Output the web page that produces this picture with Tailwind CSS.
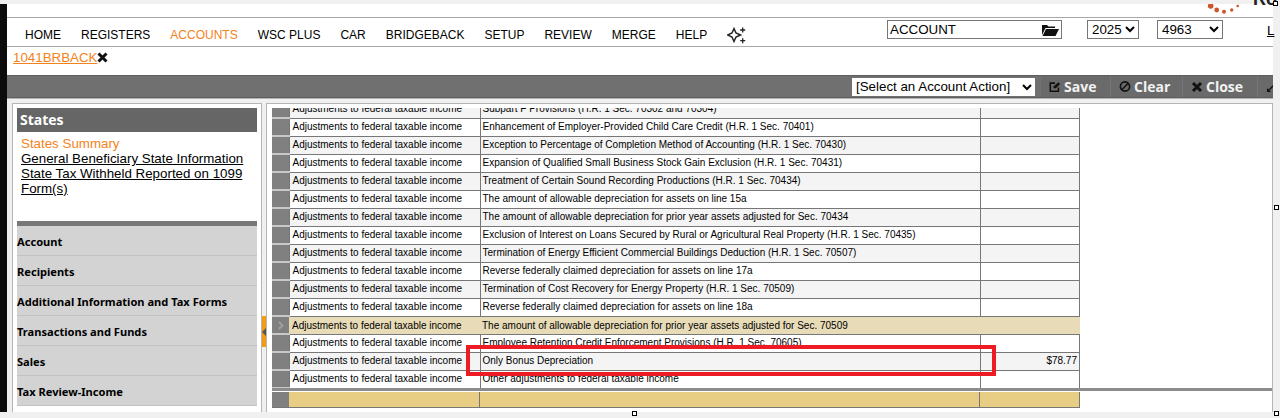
<!DOCTYPE html>
<html lang="en">
<head>
  <meta charset="UTF-8">
  <title>Accounts - States</title>
  <script src="https://cdn.jsdelivr.net/npm/@tailwindcss/browser@4"></script>
</head>
<body class="bg-[#f0f0f0] font-['Liberation_Sans',Arial,sans-serif] text-black overflow-hidden">
<div class="relative w-[1280px] h-[418px] overflow-hidden pt-[4px]">
  <!-- page frame: black strip on the left, light strip on the right and bottom -->
  <div class="flex h-[408px]">
    <div class="w-[7px] shrink-0 bg-[#0c0c0c]"></div>
    <div class="w-[1266px] bg-white flex flex-col">

      <!-- logo strip -->
      <div class="relative h-[13px] shrink-0">
        <svg class="absolute left-[1198px] top-0" width="40" height="10" viewBox="0 0 40 10" fill="#d0562a">
          <circle cx="5.700" cy="2" r="2.800"/><circle cx="11.700" cy="6" r="2.400"/><circle cx="19" cy="7.700" r="2"/><circle cx="26.700" cy="6" r="1.700"/><circle cx="32.700" cy="2" r="1.300"/>
        </svg>
        <span class="absolute left-[1246px] top-[-18px] text-[18px] font-bold text-[#222]">Ro</span>
      </div>

      <!-- main nav -->
      <div class="h-[30px] shrink-0 border-y border-[#a9a9a9] flex items-center relative">
        <nav class="flex items-center gap-[20px] pl-[18px] text-[12px] pt-[6px]">
          <a>HOME</a><a>REGISTERS</a><a class="text-[#f58220]">ACCOUNTS</a><a>WSC PLUS</a><a>CAR</a><a>BRIDGEBACK</a><a>SETUP</a><a>REVIEW</a><a>MERGE</a><a>HELP</a>
          <svg width="20" height="20" viewBox="0 0 20 20" fill="none" stroke="#222" stroke-width="1.500"><path d="M7 3.500 L9 8 L13.500 10 L9 12 L7 16.500 L5 12 L0.500 10 L5 8 Z"/><path d="M15.700 2.500v5M13.200 5h5M15.700 13.200v5M13.200 15.700h5" stroke-width="1.300"/></svg>
        </nav>
        <div class="absolute left-[880px] top-[2px] w-[175px] h-[19px] border border-[#767676] flex items-center justify-between pl-[2px] pr-[2px] text-[13.33px]">
          <span>ACCOUNT</span>
          <svg width="17" height="12" viewBox="0 0 17 12" fill="#111"><path d="M0 11V1h5l1.500 1.500H13V4H3.500L0 11Z"/><path d="M4 5h13l-3.500 7H0.500Z"/></svg>
        </div>
        <select class="absolute left-[1080px] top-[2px] w-[52px] h-[19px] border border-[#767676] text-[13.33px] bg-white"><option>2025</option></select>
        <select class="absolute left-[1150px] top-[2px] w-[66px] h-[19px] border border-[#767676] text-[13.33px] bg-white"><option>4963</option></select>
        <a class="absolute left-[1260px] top-[3px] text-[13.33px] underline text-black">L</a>
      </div>

      <!-- open account tab -->
      <div class="h-[28px] shrink-0 pl-[6px] pt-[1px] flex items-start text-[13.33px]">
        <a class="text-[#f58220] underline">1041BRBACK</a>
        <svg class="mt-[4px]" width="11" height="11" viewBox="0 0 11 11" fill="none" stroke="#111" stroke-width="3"><path d="M1.500 1.500l8 8M9.500 1.500l-8 8"/></svg>
      </div>

      <!-- action bar -->
      <div class="h-[23px] shrink-0 bg-[#707070] border-y border-[#5f5f5f] flex items-center justify-end font-['Open_Sans',sans-serif] font-bold text-[14px] text-[#f2f2f2]">
        <select class="w-[183px] h-[18px] bg-white text-black text-[13.33px] font-normal font-['Liberation_Sans',sans-serif] mr-[6px]"><option>[Select an Account Action]</option></select>
        <div class="w-[69px] h-full bg-[#6a6a6a] flex items-center gap-[3px] pl-[8px]">
          <svg width="12" height="12" viewBox="0 0 14 13" fill="none" stroke="#111" stroke-width="1.800"><path d="M7 2H1.500v9.500H11V7"/><path d="M5 8l.5-2.500L11 1l2 2-5 5z" fill="#111" stroke="none"/></svg>Save</div>
        <div class="w-[72px] h-full bg-[#6a6a6a] border-l border-[#777] flex items-center gap-[3px] pl-[8px]">
          <svg width="12" height="13" viewBox="0 0 13 13" fill="none" stroke="#111" stroke-width="1.800"><circle cx="6.500" cy="6.500" r="5"/><path d="M3 10l7-7"/></svg>Clear</div>
        <div class="w-[75px] h-full bg-[#6a6a6a] border-l border-[#777] flex items-center gap-[3px] pl-[8px]">
          <svg width="12" height="12" viewBox="0 0 12 12" fill="none" stroke="#111" stroke-width="3"><path d="M2 2l8 8M10 2l-8 8"/></svg>Close</div>
        <div class="w-[16px] h-full bg-[#6a6a6a] border-l border-[#777] pl-[8px] flex items-center overflow-hidden">
          <svg class="shrink-0" width="12" height="12" viewBox="0 0 12 12" stroke="#111" stroke-width="1.500" fill="#111"><path d="M2 10l8-8" /><path d="M1 7v4h4zM11 5V1H7z" stroke="none"/></svg>
        </div>
      </div>

      <!-- body -->
      <div class="flex-1 min-h-0 flex bg-[#f0f0f0] border-t border-[#b5b5b5] pl-[5px] pt-[4px]">
        <!-- left panel -->
        <aside class="relative w-[250px] shrink-0 bg-white border border-[#b5b5b5] border-b-0 p-[4px] overflow-hidden">
          <h2 class="h-[24px] bg-[#666] text-white font-['Open_Sans',sans-serif] font-bold text-[14px] leading-[24px] pl-[3px]">States</h2>
          <div class="h-[89px] pl-[4px] pt-[4px] text-[13.33px] leading-[15px]">
            <a class="block text-[#f58220]">States Summary</a>
            <a class="block underline">General Beneficiary State Information</a>
            <a class="block underline">State Tax Withheld Reported on 1099 Form(s)</a>
          </div>
          <div class="border-t-[5px] border-[#777] bg-[#d3d3d3] font-['Noto_Sans',sans-serif] font-bold text-[11.1px]">
            <div class="h-[30px] pt-[3px] flex items-center border-b border-[#c2c2c2]">Account</div>
            <div class="h-[30px] pt-[3px] flex items-center border-b border-[#c2c2c2]">Recipients</div>
            <div class="h-[30px] pt-[3px] flex items-center border-b border-[#c2c2c2]">Additional Information and Tax Forms</div>
            <div class="h-[30px] pt-[3px] flex items-center border-b border-[#c2c2c2]">Transactions and Funds</div>
            <div class="h-[30px] pt-[3px] flex items-center border-b border-[#c2c2c2]">Sales</div>
            <div class="h-[30px] pt-[3px] flex items-center border-b border-[#c2c2c2]">Tax Review-Income</div>
          </div>
        </aside>

        <!-- splitter -->
        <div class="w-[4px] shrink-0 pt-[213px]">
          <div class="h-[31px] bg-[#f39c12] flex items-center justify-center">
            <svg width="4" height="8" viewBox="0 0 4 8" fill="#555"><path d="M4 0v8L0 4z"/></svg>
          </div>
        </div>

        <!-- grid panel -->
        <section class="flex-1 min-w-0 bg-white border border-[#b5b5b5] border-b-0 pl-[5px] pt-[4px] overflow-hidden">
          <div class="h-[280px] overflow-hidden">
            <table id="rows" class="mt-[-9px] w-[808px] table-fixed border-collapse text-[10px]"></table>
          </div>
          <div class="h-[3px] bg-[#8c8c8c]"></div>
          <div class="flex h-[16px] mt-[1px] w-[808px] border-b border-[#777]">
            <div class="w-[17px] bg-[#808080]"></div>
            <div class="w-[191px] bg-[#e8cd85] border-r border-[#777]"></div>
            <div class="w-[500px] bg-[#e8cd85] border-r border-[#777]"></div>
            <div class="flex-1 bg-[#e8cd85] border-r border-[#777]"></div>
          </div>
        </section>
      </div>
    </div>
    <div class="flex-1 bg-[#f0f0f0]"></div>
  </div>

  <!-- annotation drawn over the screenshot -->
  <div class="absolute left-[466px] top-[345px] w-[530px] h-[31px] border-[4px] border-[#ed1c24]"></div>

  <!-- selection handles -->
  <div class="absolute left-[1273px] top-[1px] w-[5px] h-[5px] bg-white border border-black"></div>
  <div class="absolute left-[1274px] top-[205px] w-[5px] h-[5px] bg-white border border-black"></div>
  <div class="absolute left-[632px] top-[411px] w-[5px] h-[5px] bg-white border border-black"></div>
  <div class="absolute left-[1274px] top-[411px] w-[5px] h-[5px] bg-white border border-black"></div>
</div>

<script>
  const labels = [
    'Subpart F Provisions (H.R. 1 Sec. 70302 and 70304)',
    'Enhancement of Employer-Provided Child Care Credit (H.R. 1 Sec. 70401)',
    'Exception to Percentage of Completion Method of Accounting (H.R. 1 Sec. 70430)',
    'Expansion of Qualified Small Business Stock Gain Exclusion (H.R. 1 Sec. 70431)',
    'Treatment of Certain Sound Recording Productions (H.R. 1 Sec. 70434)',
    'The amount of allowable depreciation for assets on line 15a',
    'The amount of allowable depreciation for prior year assets adjusted for Sec. 70434',
    'Exclusion of Interest on Loans Secured by Rural or Agricultural Real Property (H.R. 1 Sec. 70435)',
    'Termination of Energy Efficient Commercial Buildings Deduction (H.R. 1 Sec. 70507)',
    'Reverse federally claimed depreciation for assets on line 17a',
    'Termination of Cost Recovery for Energy Property (H.R. 1 Sec. 70509)',
    'Reverse federally claimed depreciation for assets on line 18a',
    'The amount of allowable depreciation for prior year assets adjusted for Sec. 70509',
    'Employee Retention Credit Enforcement Provisions (H.R. 1 Sec. 70605)',
    'Only Bonus Depreciation',
    'Other adjustments to federal taxable income'
  ];

  const chevron = '<svg class="mx-auto" width="6" height="9" viewBox="0 0 6 9" fill="none" stroke="#a0a0a0" stroke-width="1.800"><path d="M1 1l3.500 3.500L1 8"/></svg>';

  document.getElementById('rows').innerHTML = `
    <colgroup><col class="w-[17px]"><col class="w-[191px]"><col class="w-[500px]"><col></colgroup>
    ${labels.map((label, i) => {
      const selected = i === 12;
      const bg = selected ? 'bg-[#e8dcb8]' : (i % 2 === 0 ? 'bg-[#f4f4f4]' : 'bg-white');
      const cell = selected ? 'border-y border-[#777]' : 'border border-[#777]';
      const nudge = selected ? 'pt-[2px]' : '';
      return `<tr class="h-[18px] ${bg}">
        <td class="bg-[#808080] border-y-2 border-[#c8c8c8] p-0">${selected ? chevron : ''}</td>
        <td class="${cell} ${nudge} pl-[3px] whitespace-nowrap overflow-hidden leading-[12px]">Adjustments to federal taxable income</td>
        <td class="${cell} ${nudge} pl-[2px] whitespace-nowrap overflow-hidden leading-[12px]">${label}</td>
        <td class="${cell} pr-[2px] text-right leading-[12px]">${i === 14 ? '$78.77' : ''}</td>
      </tr>`;
    }).join('')}`;
</script>
</body>
</html>
